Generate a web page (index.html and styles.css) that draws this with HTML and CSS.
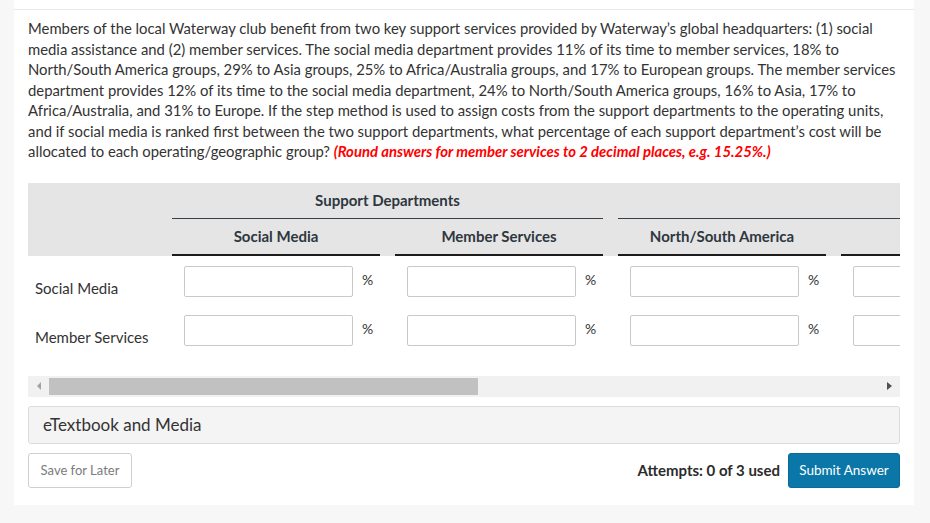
FILE: index.html
```html
<!DOCTYPE html>
<html lang="en">
<head>
<meta charset="utf-8">
<title>Step method allocation</title>
<link rel="stylesheet" href="styles.css">
</head>
<body>
<div class="card">
  <div class="content">
    <p class="question">Members of the local Waterway club benefit from two key support services provided by Waterway’s global headquarters: (1) social<br>
media assistance and (2) member services. The social media department provides 11% of its time to member services, 18% to<br>
North/South America groups, 29% to Asia groups, 25% to Africa/Australia groups, and 17% to European groups. The member services<br>
department provides 12% of its time to the social media department, 24% to North/South America groups, 16% to Asia, 17% to<br>
Africa/Australia, and 31% to Europe. If the step method is used to assign costs from the support departments to the operating units,<br>
and if social media is ranked first between the two support departments, what percentage of each support department’s cost will be<br>
allocated to each operating/geographic group? <span class="hint">(Round answers for member services to 2 decimal places, e.g. 15.25%.)</span></p>

    <div class="scroller">
      <div class="tbl">
        <div class="thead">
          <div class="hrow">
            <div class="corner"></div>
            <div class="group g2"><div class="gl">Support Departments</div></div>
            <div class="group g4"><div class="gl">Operating Departments</div></div>
          </div>
          <div class="hrow">
            <div class="corner"></div>
            <div class="col"><div class="cl">Social Media</div></div>
            <div class="col"><div class="cl">Member Services</div></div>
            <div class="col"><div class="cl">North/South America</div></div>
            <div class="col"><div class="cl">Asia</div></div>
            <div class="col"><div class="cl">Africa/Australia</div></div>
            <div class="col"><div class="cl">Europe</div></div>
          </div>
        </div>
        <div class="brow">
          <div class="rl">Social Media</div>
          <div class="cell"><input class="inp" type="text"><span class="pct">%</span></div>
          <div class="cell"><input class="inp" type="text"><span class="pct">%</span></div>
          <div class="cell"><input class="inp" type="text"><span class="pct">%</span></div>
          <div class="cell"><input class="inp" type="text"><span class="pct">%</span></div>
          <div class="cell"><input class="inp" type="text"><span class="pct">%</span></div>
          <div class="cell"><input class="inp" type="text"><span class="pct">%</span></div>
        </div>
        <div class="brow">
          <div class="rl">Member Services</div>
          <div class="cell"><input class="inp" type="text"><span class="pct">%</span></div>
          <div class="cell"><input class="inp" type="text"><span class="pct">%</span></div>
          <div class="cell"><input class="inp" type="text"><span class="pct">%</span></div>
          <div class="cell"><input class="inp" type="text"><span class="pct">%</span></div>
          <div class="cell"><input class="inp" type="text"><span class="pct">%</span></div>
          <div class="cell"><input class="inp" type="text"><span class="pct">%</span></div>
        </div>
      </div>
    </div>

    <div class="hscroll">
      <span class="sbtn"><span class="tri-left"></span></span>
      <span class="thumb"></span>
      <span class="rest"></span>
      <span class="sbtn"><span class="tri-right"></span></span>
    </div>

    <div class="media">eTextbook and Media</div>

    <div class="actions">
      <button class="save" type="button">Save for Later</button>
      <div class="submit-wrap">
        <span class="attempts">Attempts: 0 of 3 used</span>
        <button class="submit" type="button">Submit Answer</button>
      </div>
    </div>
  </div>
</div>
</body>
</html>
```

FILE: styles.css
```css
* { box-sizing: border-box; }

html, body {
  margin: 0;
  padding: 0;
  background: #f7f7f7;
}

body {
  font-family: Lato, "Open Sans", "Liberation Sans", sans-serif;
  color: #333;
  width: 930px;
  height: 523px;
  overflow: hidden;
}

.card {
  margin-left: 14px;
  width: 900px;
  background: #fff;
  padding: 9px 0 17px 0;
}

.content {
  border-top: 1px solid #e9e9e9;
  padding: 8px 14px 0 14px;
}

.question {
  margin: 0;
  font-size: 14.85px;
  line-height: 20.5px;
  color: #333;
  white-space: nowrap;
}

.hint {
  color: #f00;
  font-weight: 700;
  font-style: italic;
}

.scroller {
  margin-top: 21px;
  width: 872px;
  overflow: hidden;
}

.tbl {
  width: 1482px;
}

.thead {
  background: #e5e5e5;
}

.hrow {
  display: flex;
}

.corner {
  width: 144px;
  flex: 0 0 144px;
}

.group {
  padding-right: 15px;
  flex: 0 0 auto;
}

.g2 { width: 446px; }
.g4 { width: 892px; }

.gl {
  height: 36px;
  line-height: 34px;
  text-align: center;
  font-size: 15px;
  font-weight: 700;
  color: #2e3740;
  border-bottom: 1px solid #36404a;
}

.col {
  width: 223px;
  flex: 0 0 223px;
  padding-right: 15px;
}

.cl {
  height: 37px;
  line-height: 34px;
  text-align: center;
  font-size: 15px;
  font-weight: 700;
  color: #2e3740;
  border-bottom: 2px solid #1c1c1c;
}

.brow {
  display: flex;
  align-items: flex-end;
  height: 49px;
  padding: 10px 0 8px 0;
}

.rl {
  width: 144px;
  flex: 0 0 144px;
  padding-left: 7px;
  font-size: 15px;
  line-height: 18px;
  color: #333;
}

.cell {
  width: 223px;
  flex: 0 0 223px;
  padding-left: 12px;
  display: flex;
  align-items: center;
  gap: 9px;
  height: 31px;
}

.inp {
  width: 169px;
  height: 31px;
  margin: 0;
  border: 1px solid #c9c9c9;
  border-radius: 2px;
  background: #fff;
  font-family: inherit;
  font-size: 14px;
}

.pct {
  font-size: 14px;
  color: #333;
  line-height: 18px;
  margin-top: -3px;
}

.hscroll {
  margin-top: 22px;
  height: 21px;
  background: #f1f1f1;
  display: flex;
  align-items: center;
}

.sbtn {
  width: 21px;
  height: 21px;
  flex: 0 0 21px;
  display: flex;
  align-items: center;
  justify-content: center;
}

.tri-left {
  width: 0;
  height: 0;
  border-top: 4px solid transparent;
  border-bottom: 4px solid transparent;
  border-right: 4px solid #a3a3a3;
}

.tri-right {
  width: 0;
  height: 0;
  border-top: 4.5px solid transparent;
  border-bottom: 4.5px solid transparent;
  border-left: 5px solid #505050;
}

.thumb {
  width: 429px;
  flex: 0 0 429px;
  height: 17px;
  background: #c1c1c1;
}

.rest {
  flex: 1 1 auto;
}

.media {
  margin-top: 9px;
  height: 38px;
  border: 1px solid #dcdcdc;
  border-radius: 3px;
  background: #f4f4f4;
  padding-left: 14px;
  display: flex;
  align-items: center;
  font-size: 17px;
  color: #333;
}

.actions {
  margin-top: 9px;
  display: flex;
  justify-content: space-between;
  align-items: center;
}

.save {
  width: 104px;
  height: 35px;
  border: 1px solid #cfcfcf;
  border-radius: 3px;
  background: #fff;
  font-family: inherit;
  font-size: 13px;
  color: #7b7b7b;
  padding: 0;
}

.submit-wrap {
  display: flex;
  align-items: center;
  gap: 8px;
}

.attempts {
  font-size: 15px;
  font-weight: 700;
  color: #2b2b2b;
}

.submit {
  width: 112px;
  height: 35px;
  border: 1px solid #0a6b98;
  border-radius: 3px;
  background: #0b77a8;
  color: #fff;
  font-family: inherit;
  font-size: 13.5px;
  padding: 0;
}
```
